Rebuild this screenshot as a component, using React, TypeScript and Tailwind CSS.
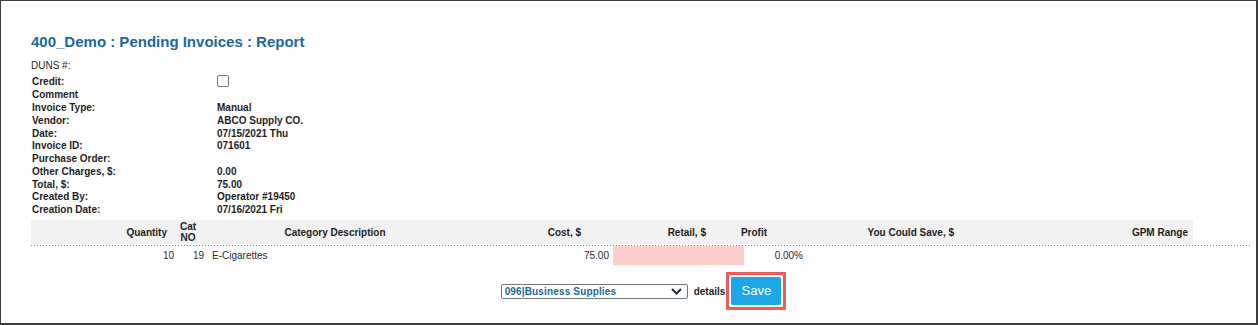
import React from "react";

const details: [string, string][] = [
  ["Invoice Type:", "Manual"],
  ["Vendor:", "ABCO Supply CO."],
  ["Date:", "07/15/2021 Thu"],
  ["Invoice ID:", "071601"],
  ["Purchase Order:", ""],
  ["Other Charges, $:", "0.00"],
  ["Total, $:", "75.00"],
  ["Created By:", "Operator #19450"],
  ["Creation Date:", "07/16/2021 Fri"],
];

const App = () => {
  return (
    <div className="w-[1258px] h-[325px] bg-white border-t border-l border-r-2 border-b-2 border-[#3c3c3c] font-['Liberation_Sans',Arial,sans-serif] text-[10px] text-[#1e1e1e] overflow-hidden">
      <div className="pl-[30px] pt-[32px]">
        <h1 className="text-[15px] leading-[17px] font-bold text-[#1a6a9e]">
          400_Demo : Pending Invoices : Report
        </h1>
        <div className="mt-[9px] h-[13px] leading-[13px]">DUNS #:</div>

        <div className="pl-[1px] font-bold">
          <div className="mt-[2px] h-[14px] flex items-center leading-[13px]">
            <span className="w-[185px]">Credit:</span>
            <span className="w-[12px] h-[12px] rounded-[2px] border border-[#767676] bg-white" />
          </div>
          <div className="h-[13px] flex items-center leading-[13px]">
            <span className="w-[185px]">Comment</span>
          </div>
          {details.map(([label, value]) => (
            <div key={label} className="h-[12.8px] flex items-center leading-[13px]">
              <span className="w-[185px]">{label}</span>
              <span>{value}</span>
            </div>
          ))}
        </div>

        {/* table */}
        <div className="mt-[4px] w-[1219px]">
          <div className="w-[1162px] h-[24px] bg-[#f2f2f2] flex items-center font-bold">
            <div className="w-[139px] text-right pr-[3px]">Quantity</div>
            <div className="w-[36px] text-center leading-[11px]">
              Cat
              <br />
              NO
            </div>
            <div className="w-[258px] text-center">Category Description</div>
            <div className="w-[120px] text-right pr-[3px]">Cost, $</div>
            <div className="w-[125px] text-right pr-[3px]">Retail, $</div>
            <div className="w-[61px] text-right pr-[3px]">Profit</div>
            <div className="w-[187px] text-right pr-[3px]">You Could Save, $</div>
            <div className="w-[236px] text-right pr-[5px]">GPM Range</div>
          </div>
          <div className="mt-[1px] h-[1px] w-[1219px] bg-[linear-gradient(to_right,#8a8a8a_1px,transparent_1px)] bg-[length:3px_1px]" />
          <div className="h-[19px] flex items-center text-[#2a2a2a]">
            <div className="w-[147px] text-right pr-[4px]">10</div>
            <div className="w-[30px] text-right pr-[4px]">19</div>
            <div className="w-[252px] pl-[4px]">E-Cigarettes</div>
            <div className="w-[153px] text-right pr-[4px]">75.00</div>
            <div className="w-[131px] h-[19px] bg-[#ffcccc]" />
            <div className="w-[63px] text-right pr-[4px]">0.00%</div>
          </div>
        </div>

        {/* actions */}
        <div className="mt-[7px] flex items-center justify-center">
          <div className="w-[187px] h-[15px] border border-[#767676] rounded-[2px] flex items-center justify-between pl-[3px] pr-[5px] text-[#1a6a9e] font-bold tracking-[0.15px]">
            <span>096|Business Supplies</span>
            <svg width="11" height="7" viewBox="0 0 11 7" fill="none">
              <path d="M1 1l4.5 4.5L10 1" stroke="#1f2d3d" strokeWidth="2" />
            </svg>
          </div>
          <span className="ml-[6px] mr-[1px] font-bold">details</span>
          <div className="border-[3px] border-[#ee5b5b] p-[2px] bg-white">
            <button className="w-[50px] h-[28px] rounded-[2px] bg-[#1da6e8] text-white text-[13px]">
              Save
            </button>
          </div>
        </div>
      </div>
    </div>
  );
};

export default App;
